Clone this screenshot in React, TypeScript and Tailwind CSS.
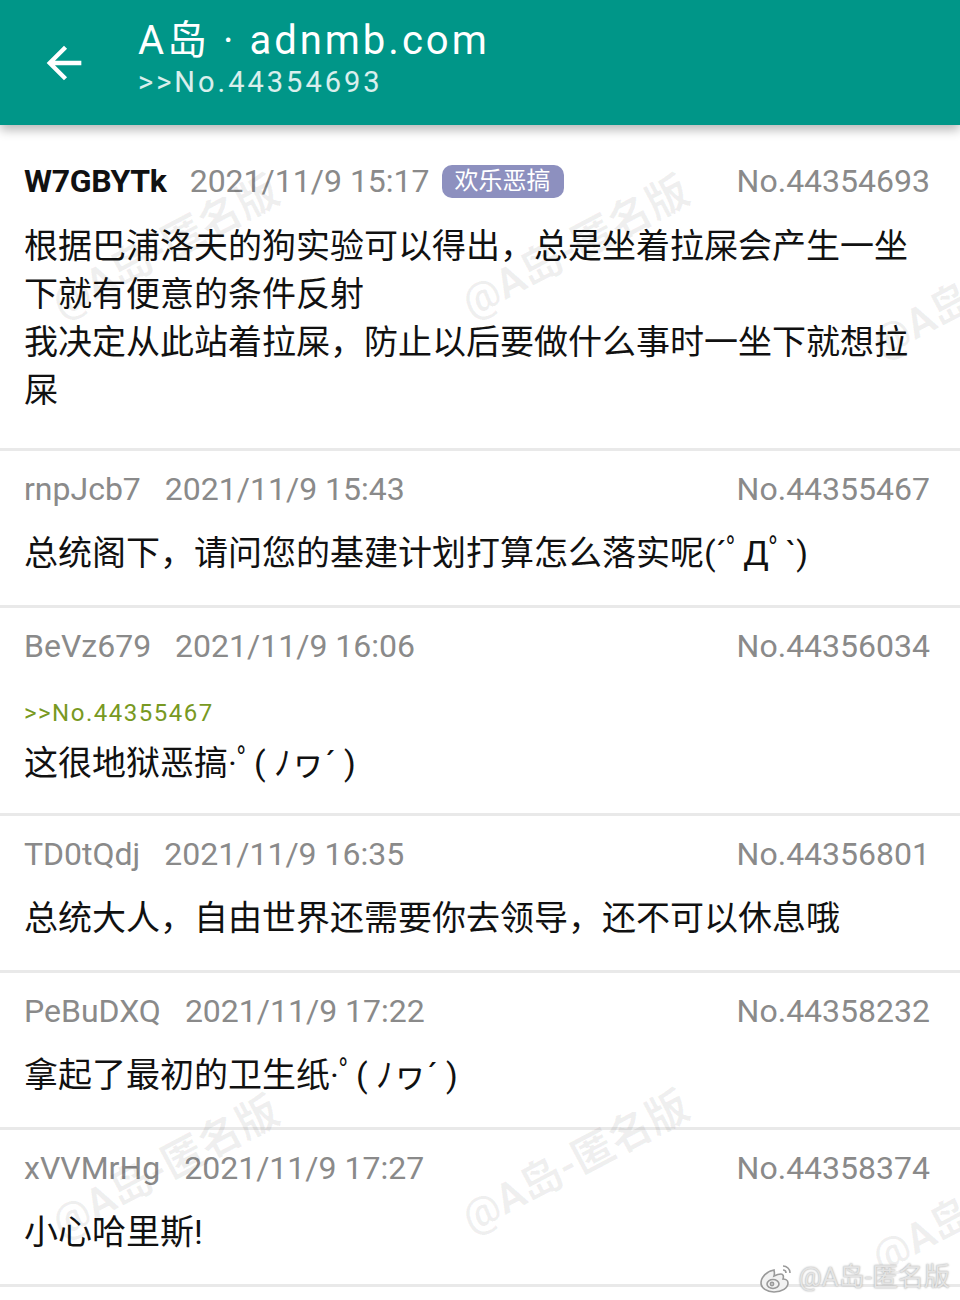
import type { ReactNode } from 'react'

const FONT = 'font-[Roboto,"Noto_Sans_CJK_SC",sans-serif]'

type Post = {
  name: string
  time: string
  no: string
  tag?: string
  quote?: string
  lines: string[]
  bold?: boolean
}

// lines are split where the app wraps them
const posts: Post[] = [
  {
    name: 'W7GBYTk',
    time: '2021/11/9 15:17',
    no: 'No.44354693',
    tag: '欢乐恶搞',
    bold: true,
    lines: [
      '根据巴浦洛夫的狗实验可以得出，总是坐着拉屎会产生一坐',
      '下就有便意的条件反射',
      '我决定从此站着拉屎，防止以后要做什么事时一坐下就想拉',
      '屎',
    ],
  },
  { name: 'rnpJcb7', time: '2021/11/9 15:43', no: 'No.44355467', lines: ['总统阁下，请问您的基建计划打算怎么落实呢(´ﾟДﾟ`)'] },
  {
    name: 'BeVz679',
    time: '2021/11/9 16:06',
    no: 'No.44356034',
    quote: '>>No.44355467',
    lines: ['这很地狱恶搞·ﾟ( ﾉヮ´ )'],
  },
  { name: 'TD0tQdj', time: '2021/11/9 16:35', no: 'No.44356801', lines: ['总统大人，自由世界还需要你去领导，还不可以休息哦'] },
  { name: 'PeBuDXQ', time: '2021/11/9 17:22', no: 'No.44358232', lines: ['拿起了最初的卫生纸·ﾟ( ﾉヮ´ )'] },
  { name: 'xVVMrHg', time: '2021/11/9 17:27', no: 'No.44358374', lines: ['小心哈里斯!'] },
]

function Watermark({ className }: { className: string }) {
  return (
    <div
      className={`pointer-events-none absolute select-none whitespace-nowrap text-[42px] font-bold text-black/[0.06] -rotate-[28deg] ${className}`}
    >
      @A岛-匿名版
    </div>
  )
}

function Card({ post, first, children }: { post: Post; first?: boolean; children?: ReactNode }) {
  const pad = first ? 'pt-[36px] pb-[34px]' : post.quote ? 'pt-[18px] pb-[26px]' : 'pt-[18px] pb-[28px]'
  return (
    <div className={`border-b-[3px] border-[#e9e9e9] bg-white pl-[24px] pr-[30px] ${pad}`}>
      <div className="flex h-[40px] items-center text-[32px] text-[#8a8a8a]">
        <span className={post.bold ? 'font-bold text-[#111] tracking-[-0.3px]' : ''}>{post.name}</span>
        <span className={post.bold ? 'ml-[23px]' : 'ml-[24px]'}>{post.time}</span>
        {post.tag && (
          <span className="ml-[12px] flex h-[33px] items-center rounded-[10px] bg-[#8d90bf] px-[13px] text-[24px] leading-none text-white">
            {post.tag}
          </span>
        )}
        <span className="ml-auto">{post.no}</span>
      </div>
      {post.quote && (
        <div className="mt-[31px] h-[32px] text-[24px] leading-[32px] tracking-[1.5px] text-[#789922]">{post.quote}</div>
      )}
      <div
        className={`${post.quote ? 'mt-[10px]' : first ? 'mt-[21px]' : 'mt-[20px]'} whitespace-nowrap text-[34px] leading-[48px] text-[#111]`}
      >
        {post.lines.map((l, i) => (
          <div key={i}>{l}</div>
        ))}
      </div>
      {children}
    </div>
  )
}

export default function App() {
  return (
    <div className={`relative h-[1300px] w-[960px] overflow-hidden bg-white ${FONT}`}>
      <header className="relative z-10 flex h-[125px] items-center bg-[#009688] pl-[38px] shadow-[0_5px_10px_rgba(0,0,0,0.28)]">
        <svg width="52" height="52" viewBox="0 0 24 24" fill="white">
          <path d="M20 11H7.83l5.59-5.59L12 4l-8 8 8 8 1.41-1.41L7.83 13H20v-2z" />
        </svg>
        <div className="ml-[48px] pb-[8px] text-white">
          <div className="text-[40px] leading-[46px] tracking-[3px]">A岛 · adnmb.com</div>
          <div className="text-[29px] leading-[36px] tracking-[3px] text-white/85">&gt;&gt;No.44354693</div>
        </div>
      </header>

      <main>
        {posts.map((p, i) => (
          <Card key={p.no} post={p} first={i === 0} />
        ))}
      </main>

      <Watermark className="left-[40px] top-[215px]" />
      <Watermark className="left-[450px] top-[215px]" />
      <Watermark className="left-[860px] top-[255px]" />
      <Watermark className="left-[40px] top-[1135px]" />
      <Watermark className="left-[450px] top-[1130px]" />
      <Watermark className="left-[860px] top-[1170px]" />

      <div className="pointer-events-none absolute right-[10px] top-[1258px] flex items-center gap-[4px] text-[26px] text-[#e4e4e4] [text-shadow:0_0_2px_#9a9a9a]">
        <svg width="36" height="32" viewBox="0 0 36 32" fill="none" stroke="#9a9a9a" strokeWidth="1.6">
          <path d="M15 8c-7 1-13 7-13 13 0 5 6 9 13 9 8 0 14-4 14-9 0-3-3-4-5-4 1-3 0-5-2-5-2 0-5 1-7 2 1-3 0-5-0-6z" fill="#f2f2f2" />
          <ellipse cx="14" cy="22" rx="6" ry="4.5" />
          <circle cx="13" cy="22" r="1.6" />
          <path d="M24 4a7 7 0 0 1 7 7M24 8a3 3 0 0 1 3 3" />
        </svg>
        <span>@A岛-匿名版</span>
      </div>
    </div>
  )
}
